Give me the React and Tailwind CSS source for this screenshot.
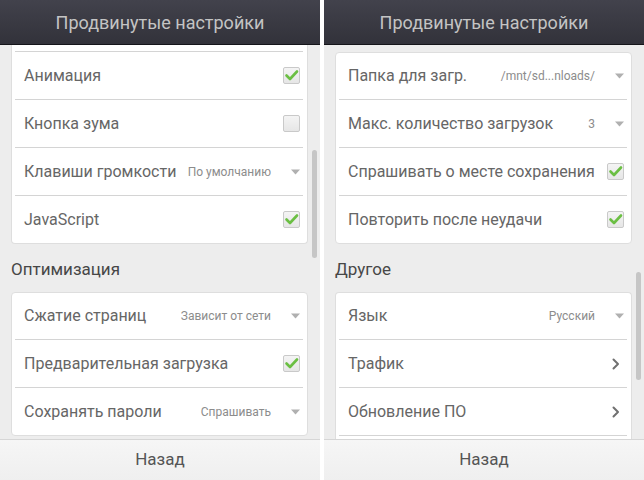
import React from "react";

const font = { fontFamily: "Roboto, 'Noto Sans', sans-serif" };

const Check = ({ on }) => (
  <div className="w-[17px] h-[17px] rounded-[2px] border border-[#c9c9c9] bg-gradient-to-b from-[#f4f4f4] to-[#e6e6e6] flex items-center justify-center">
    {on && (
      <svg width="15" height="15" viewBox="0 0 15 15">
        <path d="M2.5 7.5 L6 11 L13 3.5" fill="none" stroke="#6bbf43" strokeWidth="2.6" strokeLinecap="round" strokeLinejoin="round" />
      </svg>
    )}
  </div>
);

const Arrow = () => (
  <svg width="9" height="6" viewBox="0 0 9 6">
    <path d="M0 0.5 L9 0.5 L4.5 5.5 Z" fill="#b0b0b0" />
  </svg>
);

const Chevron = () => (
  <svg width="8" height="12" viewBox="0 0 8 12">
    <path d="M1.5 1.5 L6 6 L1.5 10.5" fill="none" stroke="#707070" strokeWidth="2" strokeLinecap="round" strokeLinejoin="round" />
  </svg>
);

const Row = ({ label, type, value, on, first, last }) => (
  <div className={`mx-[3px] mr-[4px] ${last ? "" : "border-b border-[#d4d4d4]"}`}>
    <div className={`${first ? "h-[46px]" : "h-[47px]"} flex items-center pl-[9px] pr-[3px]`}>
      <div className="flex-1 text-[16px] text-[#666] whitespace-nowrap">{label}</div>
      {type === "select" && (
        <>
          <div className="text-[12px] text-[#8c8c8c] whitespace-nowrap mr-[12px]">{value}</div>
          <div className="w-[17px] flex justify-end"><Arrow /></div>
        </>
      )}
      {type === "check" && <Check on={on} />}
      {type === "link" && (
        <div className="w-[17px] flex justify-start pl-[5px]"><Chevron /></div>
      )}
    </div>
  </div>
);

// cutTop: card scrolled so its top is under the header; cutBottom: continues under the footer
const Card = ({ rows, cutTop, cutBottom }) => (
  <div
    className={`mx-[11px] w-[297px] bg-white border border-[#dedede] ${
      cutTop ? "border-t-0 rounded-b-[4px]" : cutBottom ? "border-b-0 rounded-t-[4px]" : "rounded-[4px]"
    }`}
  >
    {cutTop && <div className="h-[7px] mx-[3px] mr-[4px] border-b border-[#d4d4d4]" />}
    {rows.map((r, i) => (
      <Row key={i} {...r} first={i === 0 && !cutTop} last={i === rows.length - 1 && !cutBottom} />
    ))}
    {cutBottom && <div className="h-[20px]" />}
  </div>
);

const Heading = ({ children }) => (
  <div className="h-[48px] flex items-center pt-[4px] px-[11px] text-[17px] text-[#474747]">{children}</div>
);

const Panel = ({ children, thumbTop }) => (
  <div className="w-[320px] h-[480px] flex flex-col bg-[#ededed]" style={font}>
    <div className="h-[45px] shrink-0 bg-gradient-to-b from-[#42424c] to-[#32323a] border-b border-[#15151a] flex items-center justify-center">
      <span className="text-[18px] text-[#c4c4c4]">Продвинутые настройки</span>
    </div>
    <div className="relative flex-1 overflow-hidden">
      {children}
      <div className="absolute right-[3px] w-[5px] h-[108px] rounded-[3px] bg-[#c6c6c6]" style={{ top: thumbTop }} />
    </div>
    <div className="h-[41px] shrink-0 border-t border-[#d6d6d6] bg-gradient-to-b from-[#f6f6f6] to-[#efefef] flex items-center justify-center">
      <span className="text-[17px] text-[#555]">Назад</span>
    </div>
  </div>
);

export default function App() {
  return (
    <div className="w-[644px] h-[480px] flex gap-[4px] bg-white overflow-hidden">
      <Panel thumbTop={105}>
        <div>
          <Card
            cutTop
            rows={[
              { label: "Анимация", type: "check", on: true },
              { label: "Кнопка зума", type: "check", on: false },
              { label: "Клавиши громкости", type: "select", value: "По умолчанию" },
              { label: "JavaScript", type: "check", on: true },
            ]}
          />
          <Heading>Оптимизация</Heading>
          <Card
            rows={[
              { label: "Сжатие страниц", type: "select", value: "Зависит от сети" },
              { label: "Предварительная загрузка", type: "check", on: true },
              { label: "Сохранять пароли", type: "select", value: "Спрашивать" },
            ]}
          />
        </div>
      </Panel>
      <Panel thumbTop={227}>
        <div className="pt-[7px]">
          <Card
            rows={[
              { label: "Папка для загр.", type: "select", value: "/mnt/sd...nloads/" },
              { label: "Макс. количество загрузок", type: "select", value: "3" },
              { label: "Спрашивать о месте сохранения", type: "check", on: true },
              { label: "Повторить после неудачи", type: "check", on: true },
            ]}
          />
          <Heading>Другое</Heading>
          <Card
            cutBottom
            rows={[
              { label: "Язык", type: "select", value: "Русский" },
              { label: "Трафик", type: "link" },
              { label: "Обновление ПО", type: "link" },
            ]}
          />
        </div>
      </Panel>
    </div>
  );
}
